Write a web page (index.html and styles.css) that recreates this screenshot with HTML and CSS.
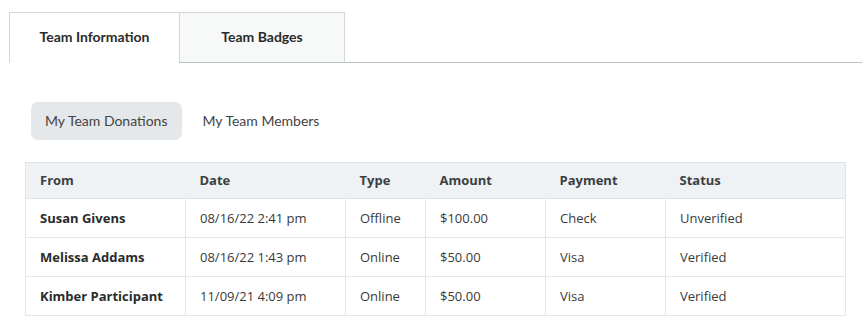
FILE: index.html
```html
<!DOCTYPE html>
<html lang="en">
<head>
    <meta charset="UTF-8">
    <meta name="viewport" content="width=device-width, initial-scale=1.0">
    <title>Team Information</title>
    <link rel="stylesheet" href="styles.css">
</head>
<body>
    <!-- Onglets principaux -->
    <div class="tabs">
        <div class="tab active">Team Information</div>
        <div class="tab">Team Badges</div>
    </div>

    <!-- Sous-navigation -->
    <div class="pills">
        <span class="pill active">My Team Donations</span>
        <span class="pill">My Team Members</span>
    </div>

    <table class="dons">
        <thead>
            <tr>
                <th class="c-from">From</th>
                <th class="c-date">Date</th>
                <th class="c-type">Type</th>
                <th class="c-amount">Amount</th>
                <th class="c-pay">Payment</th>
                <th>Status</th>
            </tr>
        </thead>
        <tbody>
            <tr>
                <td class="nom">Susan Givens</td>
                <td>08/16/22 2:41 pm</td>
                <td>Offline</td>
                <td>$100.00</td>
                <td>Check</td>
                <td>Unverified</td>
            </tr>
            <tr>
                <td class="nom">Melissa Addams</td>
                <td>08/16/22 1:43 pm</td>
                <td>Online</td>
                <td>$50.00</td>
                <td>Visa</td>
                <td>Verified</td>
            </tr>
            <tr>
                <td class="nom">Kimber Participant</td>
                <td>11/09/21 4:09 pm</td>
                <td>Online</td>
                <td>$50.00</td>
                <td>Visa</td>
                <td>Verified</td>
            </tr>
        </tbody>
    </table>
</body>
</html>
```

FILE: styles.css
```css
/* Styles généraux */
body {
    font-family: Lato, "Open Sans", Arial, sans-serif;
    margin: 0;
    padding: 0;
    background-color: #fff;
    color: #333;
    font-size: 14px;
}

/* Onglets */
.tabs {
    display: flex;
    margin: 12px 0 0 9px;
    border-bottom: 1px solid #b9c1c7;
    height: 50px;
}
.tab {
    display: flex;
    align-items: center;
    justify-content: center;
    height: 50px;
    padding-bottom: 3px;
    font-weight: bold;
    font-size: 14px;
    color: #2b2b2b;
    border: 1px solid #d3d7da;
    border-bottom: none;
    background-color: #f7f8f8;
    box-sizing: border-box;
    width: 166px;
}
.tab.active {
    width: 170px;
    height: 51px;
    padding-bottom: 4px;
    background-color: #fff;
    border-right: none;
}

/* Sous-navigation */
.pills {
    display: flex;
    gap: 7px;
    margin: 39px 0 0 31px;
}
.pill {
    display: flex;
    align-items: center;
    height: 38px;
    padding: 0 14px 1px;
    box-sizing: border-box;
    border-radius: 7px;
    color: #444;
}
.pill.active {
    background-color: #e5e8ea;
}

/* Tableau des dons */
.dons {
    margin: 22px 0 0 25px;
    width: 821px;
    border-collapse: collapse;
    border: 1px solid #dde3e8;
    table-layout: fixed;
    font-family: "Open Sans", Arial, sans-serif;
    font-size: 13px;
}
.dons th,
.dons td {
    box-sizing: border-box;
    padding: 0 14px 1px;
    white-space: nowrap;
}
.dons th {
    background-color: #eef2f5;
    text-align: left;
    font-weight: bold;
    height: 36px;
    color: #3c3f42;
    border-bottom: 1px solid #dde3e8;
}
.dons td {
    height: 39px;
    border: 1px solid #e2e7eb;
    color: #3a3a3a;
}
.dons td.nom {
    font-weight: bold;
    color: #2b2b2b;
}
.c-from, .c-date { width: 160px; }
.c-type { width: 80px; }
.c-amount, .c-pay { width: 120px; }
```
